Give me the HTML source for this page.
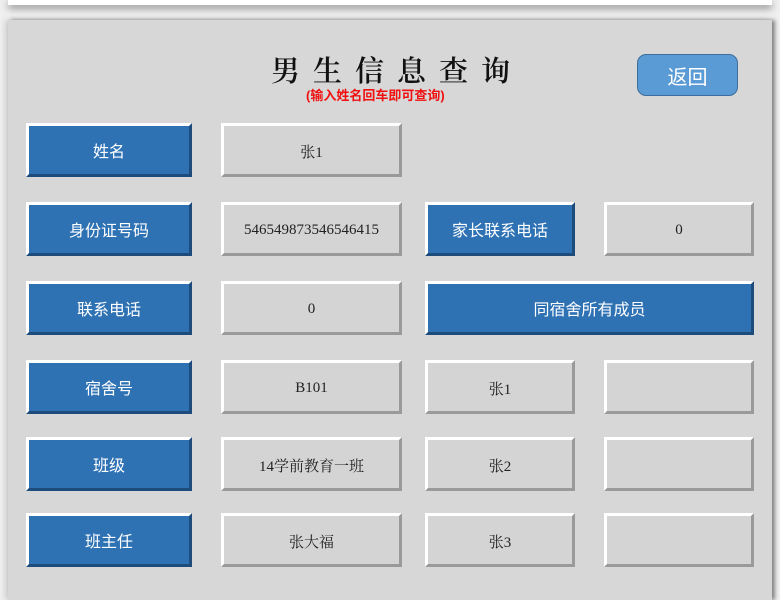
<!DOCTYPE html>
<html><head><meta charset="utf-8"><style>
body{margin:0;width:780px;height:585px;background:#f0f0f0;position:relative;overflow:hidden;font-family:"Liberation Serif","Noto Serif CJK SC",serif}
.top{position:absolute;left:8px;top:0;width:764px;height:5px;background:#fff;box-shadow:0 3px 8px rgba(0,0,0,.5)}
.panel{position:absolute;left:8px;top:20px;width:764px;height:580px;background:#d7d7d7;box-shadow:3px 0 4px rgba(0,0,0,.45),-3px 0 6px rgba(0,0,0,.15)}
.b{position:absolute;box-sizing:border-box;height:54px;display:flex;align-items:center;justify-content:center;font-size:15px;padding-top:2px}
.l{background:#2e72b4;color:#fff;border-top:3px solid #fff;border-left:3px solid #fff;border-right:3px solid #1d4c7c;border-bottom:3px solid #1d4c7c;font-family:"Liberation Sans","Noto Sans CJK SC",sans-serif;font-size:16px;padding-top:0}
.v{background:#d4d4d4;color:#222;border-top:3px solid #fff;border-left:3px solid #fff;border-right:3px solid #9a9a9a;border-bottom:3px solid #9a9a9a}
.title{position:absolute;left:271px;top:49px;font-size:29px;letter-spacing:13px;color:#111;font-weight:600;font-family:"Noto Serif CJK SC",serif}
.sub{position:absolute;left:306px;top:85px;font-size:13px;color:#f01010;font-weight:bold;font-family:"Liberation Sans","Noto Sans CJK SC",sans-serif}
.ret{position:absolute;left:637px;top:54px;width:101px;height:42px;box-sizing:border-box;background:#5b9bd5;border:1px solid #3c6d9c;border-radius:9px;color:#fff;font-size:20px;display:flex;align-items:center;justify-content:center;font-family:"Liberation Sans","Noto Sans CJK SC",sans-serif}
</style></head><body>
<div class="top"></div>
<div class="panel"></div>
<div class="title">男生信息查询</div>
<div class="sub">(输入姓名回车即可查询)</div>
<div class="ret">返回</div>

<div class="b l" style="left:26px;top:123px;width:166px">姓名</div>
<div class="b v" style="left:221px;top:123px;width:181px">张1</div>

<div class="b l" style="left:26px;top:202px;width:166px">身份证号码</div>
<div class="b v" style="left:221px;top:202px;width:181px">546549873546546415</div>
<div class="b l" style="left:425px;top:202px;width:150px">家长联系电话</div>
<div class="b v" style="left:604px;top:202px;width:150px">0</div>

<div class="b l" style="left:26px;top:281px;width:166px">联系电话</div>
<div class="b v" style="left:221px;top:281px;width:181px">0</div>
<div class="b l" style="left:425px;top:281px;width:329px">同宿舍所有成员</div>

<div class="b l" style="left:26px;top:360px;width:166px">宿舍号</div>
<div class="b v" style="left:221px;top:360px;width:181px">B101</div>
<div class="b v" style="left:425px;top:360px;width:150px">张1</div>
<div class="b v" style="left:604px;top:360px;width:150px"></div>

<div class="b l" style="left:26px;top:437px;width:166px">班级</div>
<div class="b v" style="left:221px;top:437px;width:181px">14学前教育一班</div>
<div class="b v" style="left:425px;top:437px;width:150px">张2</div>
<div class="b v" style="left:604px;top:437px;width:150px"></div>

<div class="b l" style="left:26px;top:513px;width:166px">班主任</div>
<div class="b v" style="left:221px;top:513px;width:181px">张大福</div>
<div class="b v" style="left:425px;top:513px;width:150px">张3</div>
<div class="b v" style="left:604px;top:513px;width:150px"></div>
</body></html>
